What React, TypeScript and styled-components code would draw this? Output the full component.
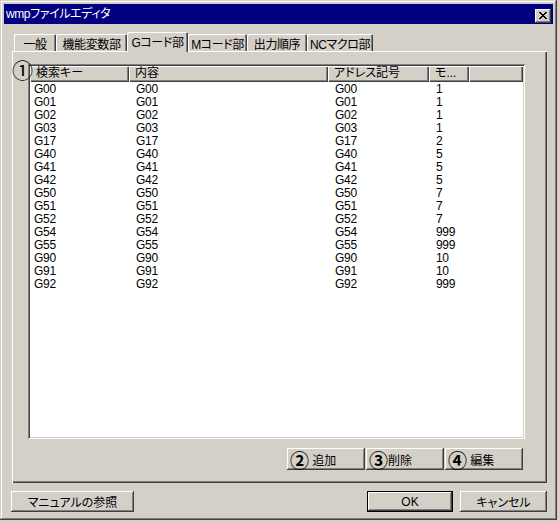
import React from "react";
import styled, { createGlobalStyle } from "styled-components";

const FACE = "#d4d0c8";
const UI_FONT = `"Liberation Sans", "Noto Sans CJK JP", sans-serif`;
const CJK_FONT = `"Noto Sans CJK JP", "Liberation Sans", sans-serif`;

const GlobalStyle = createGlobalStyle`
  html, body { margin: 0; padding: 0; background: ${FACE}; }
  body {
    font-family: ${UI_FONT};
    font-size: 12px;
    color: #000;
    font-feature-settings: "palt";
  }
  * { box-sizing: border-box; }
`;

const Window = styled.div`
  width: 557px;
  height: 520px;
  padding: 4px;
  background: ${FACE};
  box-shadow: inset -1px -1px #404040, inset 1px 1px ${FACE},
    inset -2px -2px #808080, inset 2px 2px #fff;
  display: flex;
  flex-direction: column;
`;

const TitleBar = styled.div`
  height: 20px;
  background: #000080;
  display: flex;
  align-items: center;
  justify-content: space-between;
  padding: 0 2px 0 2px;
`;

const TitleText = styled.span`
  color: #fff;
  font-size: 12px;
  line-height: 20px;
  letter-spacing: -0.4px;
`;

const CloseButton = styled.div`
  width: 16px;
  height: 14px;
  margin-top: 3px;
  background: ${FACE};
  box-shadow: inset -1px -1px #404040, inset 1px 1px #fff,
    inset -2px -2px #808080, inset 2px 2px ${FACE};
  display: flex;
  align-items: center;
  justify-content: center;
  padding: 0 1px 1px 0;
`;

const Content = styled.div`
  flex: 1;
  display: flex;
  flex-direction: column;
  padding: 8px 6px 0 8px;
`;

const TabRow = styled.div`
  display: flex;
  align-items: flex-end;
  height: 19px;
  padding-left: 2px;
  position: relative;
  z-index: 1;
`;

const Tab = styled.div<{ $w: number; $active?: boolean }>`
  width: ${(p) => p.$w}px;
  height: ${(p) => (p.$active ? 20 : 17)}px;
  margin-bottom: ${(p) => (p.$active ? -1 : 0)}px;
  background: ${FACE};
  border-radius: 2px 2px 0 0;
  box-shadow: inset 1px 1px #fff, inset -1px 0 #404040, inset -2px 0 #808080;
  display: flex;
  align-items: center;
  justify-content: center;
  font-family: ${UI_FONT};
  font-size: 12px;
  letter-spacing: -0.4px;
  padding-top: ${(p) => (p.$active ? 0 : 2)}px;
  padding-bottom: ${(p) => (p.$active ? 2 : 0)}px;
  white-space: nowrap;
  overflow: hidden;
`;

const Panel = styled.div`
  position: relative;
  height: 432px;
  background: ${FACE};
  box-shadow: inset 1px 1px #fff, inset -1px -1px #404040, inset -2px -2px #808080;
  padding: 13px 22px 0 16px;
  display: flex;
  flex-direction: column;
`;

const Marker = styled.span`
  position: absolute;
  left: 0px;
  top: 8px;
  font-family: ${CJK_FONT};
  font-size: 21px;
  line-height: 21px;
`;

const List = styled.div`
  width: 497px;
  height: 375px;
  background: #fff;
  padding: 2px;
  box-shadow: inset 1px 1px #808080, inset -1px -1px #fff,
    inset 2px 2px #404040, inset -2px -2px ${FACE};
  display: flex;
  flex-direction: column;
`;

const COLS = "99px 199px 101px 40px 54px";

const Header = styled.div`
  display: grid;
  grid-template-columns: ${COLS};
  height: 16px;
`;

const HeaderCell = styled.div`
  background: ${FACE};
  box-shadow: inset 1px 1px #fff, inset -1px -1px #404040, inset -2px -2px #808080;
  padding-left: 6px;
  line-height: 15px;
  font-size: 12px;
  white-space: nowrap;
  overflow: hidden;
`;

const Body = styled.div`
  padding-top: 1px;
`;

const Row = styled.div`
  display: grid;
  grid-template-columns: ${COLS};
  height: 13px;
`;

const Cell = styled.div<{ $first?: boolean }>`
  padding-left: ${(p) => (p.$first ? 4 : 7)}px;
  line-height: 13px;
  font-size: 12px;
  letter-spacing: -0.3px;
  white-space: nowrap;
`;

const ButtonRow = styled.div`
  display: flex;
  justify-content: flex-end;
  gap: 1px;
  margin-top: 9px;
  padding-right: 2px;
`;

const WinButton = styled.div<{ $w: number; $h: number; $default?: boolean; $left?: boolean }>`
  width: ${(p) => p.$w}px;
  height: ${(p) => p.$h}px;
  background: ${FACE};
  box-shadow: ${(p) =>
    p.$default
      ? `inset 0 0 0 1px #000, inset -2px -2px #404040, inset 2px 2px #fff, inset -3px -3px #808080`
      : `inset -1px -1px #404040, inset 1px 1px #fff, inset -2px -2px #808080, inset 2px 2px ${FACE}`};
  display: flex;
  align-items: center;
  justify-content: ${(p) => (p.$left ? "flex-start" : "center")};
  padding-left: ${(p) => (p.$left ? 3 : 0)}px;
  font-size: 12px;
  white-space: pre;
`;

const Circled = styled.span`
  font-family: ${CJK_FONT};
  font-size: 19px;
  font-weight: bold;
  line-height: 19px;
`;

const ButtonLabel = styled.span`
  font-family: ${UI_FONT};
  font-size: 12px;
`;

const BottomRow = styled.div`
  display: flex;
  justify-content: space-between;
  margin-top: 8px;
  margin-left: -1px;
`;

const RightGroup = styled.div`
  display: flex;
  gap: 7px;
`;

const tabs = [
  { label: "一般", w: 42 },
  { label: "機能変数部", w: 71 },
  { label: "Gコード部", w: 61, active: true },
  { label: "Mコード部", w: 59 },
  { label: "出力順序", w: 60 },
  { label: "NCマクロ部", w: 66 },
];

const data: [string, string, string, string][] = [
  ["G00", "G00", "G00", "1"],
  ["G01", "G01", "G01", "1"],
  ["G02", "G02", "G02", "1"],
  ["G03", "G03", "G03", "1"],
  ["G17", "G17", "G17", "2"],
  ["G40", "G40", "G40", "5"],
  ["G41", "G41", "G41", "5"],
  ["G42", "G42", "G42", "5"],
  ["G50", "G50", "G50", "7"],
  ["G51", "G51", "G51", "7"],
  ["G52", "G52", "G52", "7"],
  ["G54", "G54", "G54", "999"],
  ["G55", "G55", "G55", "999"],
  ["G90", "G90", "G90", "10"],
  ["G91", "G91", "G91", "10"],
  ["G92", "G92", "G92", "999"],
];

const CloseGlyph = () => (
  <svg width="8" height="7" viewBox="0 0 8 7" shapeRendering="crispEdges">
    <path
      fill="#000"
      d="M0 0h2v1h-2zM6 0h2v1h-2zM1 1h2v1h-2zM5 1h2v1h-2zM2 2h4v1h-4zM3 3h2v1h-2zM2 4h4v1h-4zM1 5h2v1h-2zM5 5h2v1h-2zM0 6h2v1h-2zM6 6h2v1h-2z"
    />
  </svg>
);

export default function App() {
  return (
    <>
      <GlobalStyle />
      <Window>
        <TitleBar>
          <TitleText>wmpファイルエディタ</TitleText>
          <CloseButton>
            <CloseGlyph />
          </CloseButton>
        </TitleBar>
        <Content>
          <TabRow>
            {tabs.map((t) => (
              <Tab key={t.label} $w={t.w} $active={t.active}>
                {t.label}
              </Tab>
            ))}
          </TabRow>
          <Panel>
            <Marker>①</Marker>
            <List>
              <Header>
                <HeaderCell>検索キー</HeaderCell>
                <HeaderCell>内容</HeaderCell>
                <HeaderCell>アドレス記号</HeaderCell>
                <HeaderCell>モ...</HeaderCell>
                <HeaderCell />
              </Header>
              <Body>
                {data.map((r) => (
                  <Row key={r[0]}>
                    <Cell $first>{r[0]}</Cell>
                    <Cell>{r[1]}</Cell>
                    <Cell>{r[2]}</Cell>
                    <Cell>{r[3]}</Cell>
                  </Row>
                ))}
              </Body>
            </List>
            <ButtonRow>
              <WinButton $w={78} $h={22} $left>
                <Circled>②</Circled>
                <ButtonLabel>{" 追加"}</ButtonLabel>
              </WinButton>
              <WinButton $w={78} $h={22} $left>
                <Circled>③</Circled>
                <ButtonLabel>{"削除"}</ButtonLabel>
              </WinButton>
              <WinButton $w={78} $h={22} $left>
                <Circled>④</Circled>
                <ButtonLabel>{" 編集"}</ButtonLabel>
              </WinButton>
            </ButtonRow>
          </Panel>
          <BottomRow>
            <WinButton $w={123} $h={21}>
              マニュアルの参照
            </WinButton>
            <RightGroup>
              <WinButton $w={86} $h={21} $default>
                OK
              </WinButton>
              <WinButton $w={87} $h={21}>
                キャンセル
              </WinButton>
            </RightGroup>
          </BottomRow>
        </Content>
      </Window>
    </>
  );
}
